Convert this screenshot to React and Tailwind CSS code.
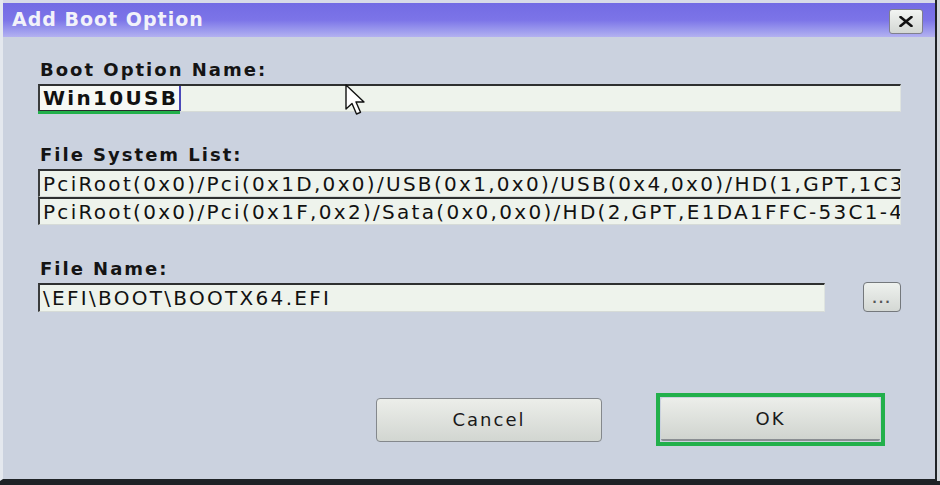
import React from 'react';

const label = "ml-[2px] h-[22px] leading-[22px] text-[18px] font-bold tracking-[2px] text-[#141414] [font-family:'DejaVu_Sans',sans-serif]";
const field = "border-t-2 border-l-2 border-t-[#2e3030] border-l-[#3a3c3c] border-r border-b border-r-[#dfe4e0] border-b-[#d6dbd7] bg-[#eef3ec]";
const fieldText = "whitespace-nowrap pl-[3px] text-[20px] tracking-[2.3px] text-[#111] [font-family:'DejaVu_Sans',sans-serif]";

const Cursor = () => (
  <svg className="absolute left-[342px] top-[47px]" width="24" height="34" viewBox="0 0 24 34">
    <path d="M1 1 L1 25 L7 19.5 L11.5 30 L15.5 28.3 L11 18 L19 18 Z" fill="#ffffff" stroke="#111" strokeWidth="1.4" strokeLinejoin="round" />
  </svg>
);

const App = () => {
  return (
    <div className="relative w-[940px] h-[485px] bg-[#d3d7dc] flex flex-col overflow-hidden">
      <div className="w-[937px] h-[481px] flex flex-col border-l-[3px] border-l-[#e4e8ee] border-r-2 border-r-[#1f2327] border-b-2 border-b-[#1f2327]">
        {/* Title bar */}
        <div className="h-[37px] flex items-center border-t-[3px] border-t-[#d8dae8] bg-gradient-to-b from-[#736be4] via-[#7c74e8] to-[#b3b1f0]">
          <span className="pl-[9px] pb-[2px] text-[19px] font-bold tracking-[1px] text-[#f2f2fa] [font-family:'DejaVu_Sans',sans-serif]">Add Boot Option</span>
          <button className="ml-auto mr-[12px] mt-[2px] w-[34px] h-[25px] flex items-center justify-center rounded-[3px] border border-[#80808c] bg-gradient-to-b from-[#f2f4f2] to-[#d3d7d3]">
            <svg width="14" height="11" viewBox="0 0 14 11">
              <path d="M1.5 1 L12.5 10 M12.5 1 L1.5 10" stroke="#111" strokeWidth="2.6" strokeLinecap="round" />
            </svg>
          </button>
        </div>

        {/* Body */}
        <div className="relative flex-1 bg-[#cbd2df] pl-[35px] pr-[34px] flex flex-col">
          <div className={`mt-[22px] ${label}`}>Boot Option Name:</div>
          <div className={`relative mt-[3px] h-[28px] flex ${field}`}>
            <div className="h-full flex items-center bg-[#f7f9f5] border-b border-b-[#2a2c2c] border-r-2 border-r-[#4a48b8] pr-[1px]">
              <span className={`${fieldText} font-bold`}>Win10USB</span>
            </div>
            <span className="absolute left-[-2px] top-[25px] w-[142px] h-[3px] bg-[#22b04b]"></span>
          </div>

          <div className={`mt-[32px] ${label}`}>File System List:</div>
          <div className="mt-[3px] flex flex-col">
            <div className={`h-[28px] flex items-center overflow-hidden ${field}`}>
              <span className={fieldText}>PciRoot(0x0)/Pci(0x1D,0x0)/USB(0x1,0x0)/USB(0x4,0x0)/HD(1,GPT,1C3</span>
            </div>
            <div className={`h-[28px] flex items-center overflow-hidden ${field}`}>
              <span className={fieldText}>PciRoot(0x0)/Pci(0x1F,0x2)/Sata(0x0,0x0)/HD(2,GPT,E1DA1FFC-53C1-4</span>
            </div>
          </div>

          <div className={`mt-[33px] ${label}`}>File Name:</div>
          <div className="mt-[2px] flex items-center">
            <div className={`w-[787px] h-[29px] flex items-center overflow-hidden ${field}`}>
              <span className={fieldText}>\EFI\BOOT\BOOTX64.EFI</span>
            </div>
            <button className="ml-auto w-[38px] h-[30px] flex items-end justify-center pb-[6px] rounded-[4px] border border-[#74787c] bg-gradient-to-b from-[#eef1ee] to-[#d4d8d4]">
              <span className="text-[12px] leading-none font-bold tracking-[2px] text-[#555] [font-family:'DejaVu_Sans',sans-serif]">...</span>
            </button>
          </div>

          {/* Buttons */}
          <div className="mt-[81px] flex items-center justify-end pr-[16px]">
            <button className="w-[226px] h-[44px] rounded-[4px] border border-[#84888c] bg-gradient-to-b from-[#eceeea] to-[#d2d6d1] text-[18px] tracking-[2px] text-[#1a1a1a] [font-family:'DejaVu_Sans',sans-serif]">
              Cancel
            </button>
            <div className="ml-[54px] w-[229px] h-[53px] border-4 border-[#22b04b] p-[1px] flex">
              <button className="flex-1 rounded-[2px] border-b-2 border-b-[#8a8e92] bg-gradient-to-b from-[#eceeea] to-[#d0d4cf] text-[18px] tracking-[2px] text-[#1a1a1a] [font-family:'DejaVu_Sans',sans-serif]">
                OK
              </button>
            </div>
          </div>
          <Cursor />
        </div>
      </div>
      <div className="flex-1 bg-[#1e2226]"></div>
    </div>
  );
};

export default App;
